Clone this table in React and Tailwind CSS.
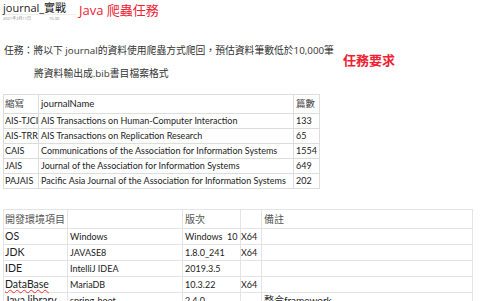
const journals = [
  ['AIS-TJCI', 'AIS Transactions on Human-Computer Interaction', '133'],
  ['AIS-TRR', 'AIS Transactions on Replication Research', '65'],
  ['CAIS', 'Communications of the Association for Information Systems', '1554'],
  ['JAIS', 'Journal of the Association for Information Systems', '649'],
  ['PAJAIS', 'Pacific Asia Journal of the Association for Information Systems', '202'],
];

const envs = [
  ['OS', 'Windows', 'Windows  10', 'X64', ''],
  ['JDK', 'JAVASE8', '1.8.0_241', 'X64', ''],
  ['IDE', 'IntelliJ IDEA', '2019.3.5', '', ''],
  ['DataBase', 'MariaDB', '10.3.22', 'X64', ''],
  ['Java library', 'spring-boot', '2.4.0', '', '整合framework'],
];

const sans = { fontFamily: '"Open Sans", "Noto Sans CJK TC", sans-serif' };
const narrow = { fontFamily: 'Lato, "Noto Sans CJK TC", sans-serif' };

export default function App() {
  return (
    <div className="w-[480px] h-[301px] overflow-hidden bg-white text-[#333]" style={sans}>
      {/* title */}
      <div className="flex items-start pl-[3px] pt-[1px]">
        <div className="w-[73px] border-b border-[#eee]">
          <div className="text-[11px] leading-[13px] text-[#222]">journal_實戰</div>
        </div>
        <div className="ml-[3px] text-[13px] leading-[18px] text-[#ee2233]">Java 爬蟲任務</div>
      </div>
      <div className="flex pl-[3px] -mt-[3px] text-[4px] leading-[6px] text-[#888] gap-[18px]">
        <span>2021年2月11日</span>
        <span>15:30</span>
      </div>

      {/* task */}
      <div className="flex mt-[17px] pl-[4px]">
        <div className="text-[9.8px] leading-[23px]">
          <div>任務：將以下 journal的資料使用爬蟲方式爬回，預估資料筆數低於10,000筆</div>
          <div className="pl-[30px]">將資料輸出成.bib書目檔案格式</div>
        </div>
        <div className="ml-[9px] mt-[13px] text-[13px] leading-[16px] font-bold text-[#ee2233]">任務要求</div>
      </div>

      {/* journals */}
      <table className="ml-[3px] mt-[9px] w-[316px] table-fixed border-collapse text-[9px] text-[#222]" style={narrow}>
        <colgroup>
          <col className="w-[35px]" />
          <col className="w-[255px]" />
          <col className="w-[26px]" />
        </colgroup>
        <tbody>
          <tr className="h-[19px]">
            <td className="border border-[#ddd] px-[1px] text-[#444] text-[9.5px]">縮寫</td>
            <td className="border border-[#ddd] px-[2px] text-[9.5px]">journalName</td>
            <td className="border border-[#ddd] px-[2px] text-[#444] text-[9.5px]">篇數</td>
          </tr>
          {journals.map((r) => (
            <tr key={r[0]} className="h-[15px]">
              <td className="border border-[#ddd] px-[1px] leading-[14px] whitespace-nowrap">{r[0]}</td>
              <td className="border border-[#ddd] px-[2px] leading-[14px] whitespace-nowrap">{r[1]}</td>
              <td className="border border-[#ddd] px-[2px] leading-[14px]">{r[2]}</td>
            </tr>
          ))}
        </tbody>
      </table>

      {/* environment */}
      <table className="ml-[3px] mt-[20px] w-[469px] table-fixed border-collapse text-[9px] text-[#222]" style={narrow}>
        <colgroup>
          <col className="w-[64px]" />
          <col className="w-[115px]" />
          <col className="w-[58px]" />
          <col className="w-[21px]" />
          <col className="w-[211px]" />
        </colgroup>
        <tbody>
          <tr className="h-[19px]">
            <td className="border border-[#e4e4e4] px-[1px] text-[#555] text-[10px]">開發環境項目</td>
            <td className="border border-[#e4e4e4] px-[2px]"></td>
            <td className="border border-[#e4e4e4] px-[2px] text-[#555] text-[10px]">版次</td>
            <td className="border border-[#e4e4e4]"></td>
            <td className="border border-[#e4e4e4] px-[2px] text-[#555] text-[10px]">備註</td>
          </tr>
          {envs.map((r) => (
            <tr key={r[0]} className="h-[16px]">
              <td className="border border-[#e4e4e4] px-[1px] text-[10.5px] leading-[15px] whitespace-nowrap">
                {r[0] === 'DataBase' ? (
                  <span className="underline decoration-wavy decoration-[#e33] decoration-[0.5px]">DataBase</span>
                ) : r[0]}
              </td>
              <td className="border border-[#e4e4e4] px-[2px] leading-[15px]">{r[1]}</td>
              <td className="border border-[#e4e4e4] px-[2px] leading-[15px] whitespace-pre">{r[2]}</td>
              <td className="border border-[#e4e4e4] leading-[15px]">{r[3]}</td>
              <td className="border border-[#e4e4e4] px-[2px] leading-[15px] text-[10px]">{r[4]}</td>
            </tr>
          ))}
        </tbody>
      </table>
    </div>
  );
}
